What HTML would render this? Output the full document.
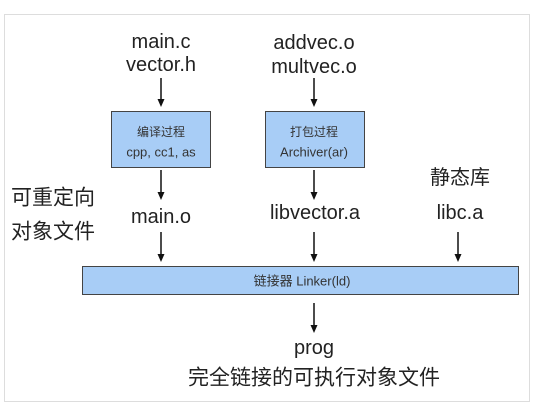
<!DOCTYPE html>
<html><head><meta charset="utf-8"><style>
body{margin:0;width:542px;height:404px;background:#fff;position:relative;overflow:hidden;font-family:"Liberation Sans","Noto Sans CJK SC",sans-serif;color:#222}
.frame{position:absolute;left:4px;top:14px;width:524px;height:386px;border:1px solid #ddd}
.t{position:absolute;white-space:nowrap;transform:translate(-50%,-50%);font-size:20px;line-height:1}
.box{position:absolute;background:#a8cdf6;border:1.5px solid #444;box-sizing:border-box}
.s{position:absolute;white-space:nowrap;transform:translate(-50%,-50%);font-size:12px;color:#333;line-height:1}
</style></head><body>
<div class="frame"></div>
<div class="t" style="left:161px;top:42px">main.c</div>
<div class="t" style="left:161px;top:65px">vector.h</div>
<div class="t" style="left:314px;top:43px">addvec.o</div>
<div class="t" style="left:314px;top:67px">multvec.o</div>
<div class="box" style="left:111px;top:111px;width:100px;height:57px"></div>
<div class="box" style="left:265px;top:111px;width:100px;height:57px"></div>
<div class="s" style="left:161px;top:132px">编译过程</div>
<div class="s" style="left:161px;top:152px;font-size:13px">cpp, cc1, as</div>
<div class="s" style="left:314px;top:132px">打包过程</div>
<div class="s" style="left:314px;top:152px;font-size:13px">Archiver(ar)</div>
<div class="t" style="left:460px;top:178px">静态库</div>
<div class="t" style="left:53px;top:198px;font-size:21px">可重定向</div>
<div class="t" style="left:53px;top:232px;font-size:21px">对象文件</div>
<div class="t" style="left:161px;top:217px">main.o</div>
<div class="t" style="left:315px;top:213px">libvector.a</div>
<div class="t" style="left:460px;top:213px">libc.a</div>
<div class="box" style="left:82px;top:266px;width:437px;height:29px"></div>
<div class="s" style="left:302px;top:281px;font-size:13px">链接器 Linker(ld)</div>
<div class="t" style="left:314px;top:348px">prog</div>
<div class="t" style="left:314px;top:378px;font-size:21px">完全链接的可执行对象文件</div>
<svg width="542" height="404" style="position:absolute;left:0;top:0">
<g stroke="#111" stroke-width="1.5">
<line x1="161" y1="78" x2="161" y2="100"/>
<line x1="314" y1="78" x2="314" y2="100"/>
<line x1="161" y1="170" x2="161" y2="193"/>
<line x1="314" y1="170" x2="314" y2="193"/>
<line x1="161" y1="232" x2="161" y2="255"/>
<line x1="314" y1="232" x2="314" y2="255"/>
<line x1="458" y1="232" x2="458" y2="255"/>
<line x1="314" y1="303" x2="314" y2="326"/>
</g>
<g fill="#111">
<path d="M157.5,99 L164.5,99 L161,107 Z"/>
<path d="M310.5,99 L317.5,99 L314,107 Z"/>
<path d="M157.5,192 L164.5,192 L161,200 Z"/>
<path d="M310.5,192 L317.5,192 L314,200 Z"/>
<path d="M157.5,254 L164.5,254 L161,262 Z"/>
<path d="M310.5,254 L317.5,254 L314,262 Z"/>
<path d="M454.5,254 L461.5,254 L458,262 Z"/>
<path d="M310.5,325 L317.5,325 L314,333 Z"/>
</g></svg>
</body></html>
